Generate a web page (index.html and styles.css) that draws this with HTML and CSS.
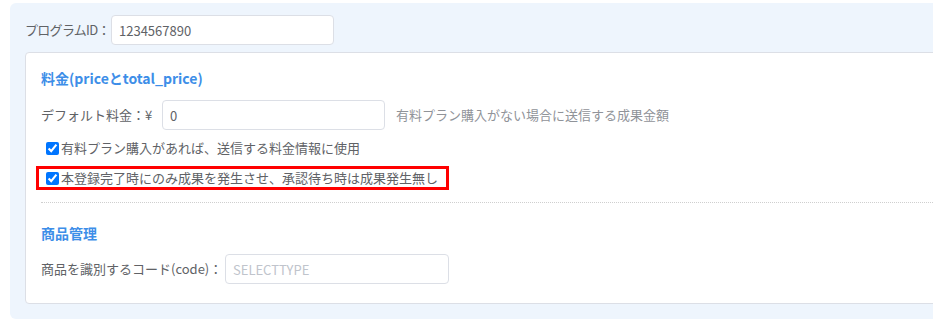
FILE: index.html
```html
<!DOCTYPE html>
<html lang="ja">
<head>
<meta charset="utf-8">
<link rel="stylesheet" href="styles.css">
</head>
<body>
<div class="panel">
  <div class="row top-row">
    <label class="label lbl-program">プログラムID：</label>
    <input class="input w-program" type="text" value="1234567890">
  </div>
  <div class="card">
    <h3 class="heading">料金(priceとtotal_price)</h3>
    <div class="row row-price">
      <label class="label lbl-price">デフォルト料金：¥</label>
      <input class="input w-price" type="text" value="0">
      <span class="hint">有料プラン購入がない場合に送信する成果金額</span>
    </div>
    <div class="check-row first">
      <label class="check"><input type="checkbox" checked><span>有料プラン購入があれば、送信する料金情報に使用</span></label>
    </div>
    <div class="check-row second">
      <label class="check highlight"><input type="checkbox" checked><span>本登録完了時にのみ成果を発生させ、承認待ち時は成果発生無し</span></label>
    </div>
    <hr class="sep">
    <h3 class="heading">商品管理</h3>
    <div class="row row-code">
      <label class="label lbl-code">商品を識別するコード(code)：</label>
      <input class="input w-code" type="text" placeholder="SELECTTYPE">
    </div>
  </div>
</div>
</body>
</html>
```
FILE: styles.css
```css
html, body {
  margin: 0;
  padding: 0;
  background: #fff;
  overflow: hidden;
}
body {
  padding: 3px 0 0 10px;
  font-family: "Noto Sans CJK JP", "Noto Sans", sans-serif;
  font-size: 13px;
  line-height: 20px;
  color: #606266;
}
.panel {
  width: 1000px;
  background: #eef5fd;
  border-radius: 6px;
  padding: 12px 0 15px 15px;
  box-sizing: border-box;
}
.row {
  display: flex;
  align-items: center;
  height: 30px;
}
.label {
  white-space: nowrap;
  flex-shrink: 0;
  overflow: visible;
}
.lbl-program { width: 86px; letter-spacing: -0.7px; }
.lbl-price { width: 121px; }
.lbl-code { width: 184px; }
.input {
  height: 30px;
  box-sizing: border-box;
  border: 1px solid #dcdfe6;
  border-radius: 4px;
  padding: 0 7px;
  font-family: inherit;
  font-size: 13px;
  color: #606266;
  background: #fff;
  outline: none;
}
.input::placeholder {
  color: #c0c4cc;
}
.w-program { width: 223px; }
.w-price { width: 223px; }
.w-code { width: 224px; }
.hint {
  margin-left: 11px;
  color: #909399;
  white-space: nowrap;
}
.card {
  margin-top: 7px;
  background: #fff;
  border: 1px solid #dcdfe6;
  border-radius: 4px;
  padding: 13px 0 19px 15px;
}
.heading {
  margin: 0;
  font-size: 14px;
  font-weight: bold;
  color: #3d8ee8;
  line-height: 24px;
  height: 24px;
}
.row-price {
  margin-top: 10px;
}
.check-row {
  padding-left: 5px;
  height: 20px;
  display: flex;
  align-items: center;
}
.check-row.first { margin-top: 8px; }
.check-row.second { margin-top: 10px; }
.check {
  display: inline-flex;
  align-items: center;
  white-space: nowrap;
  color: #606266;
}
.check input {
  margin: 0 2px 0 0;
  width: 13px;
  height: 13px;
  accent-color: #0075ff;
}
.highlight {
  outline: 3px solid #ff0000;
  padding: 0 8px 0 7px;
  margin-left: -7px;
  height: 18px;
}
.sep {
  border: 0;
  border-top: 1px dotted #cfcfcf;
  margin: 14px 0 18px 0;
  height: 0;
}
.row-code {
  margin-top: 9px;
}
```
